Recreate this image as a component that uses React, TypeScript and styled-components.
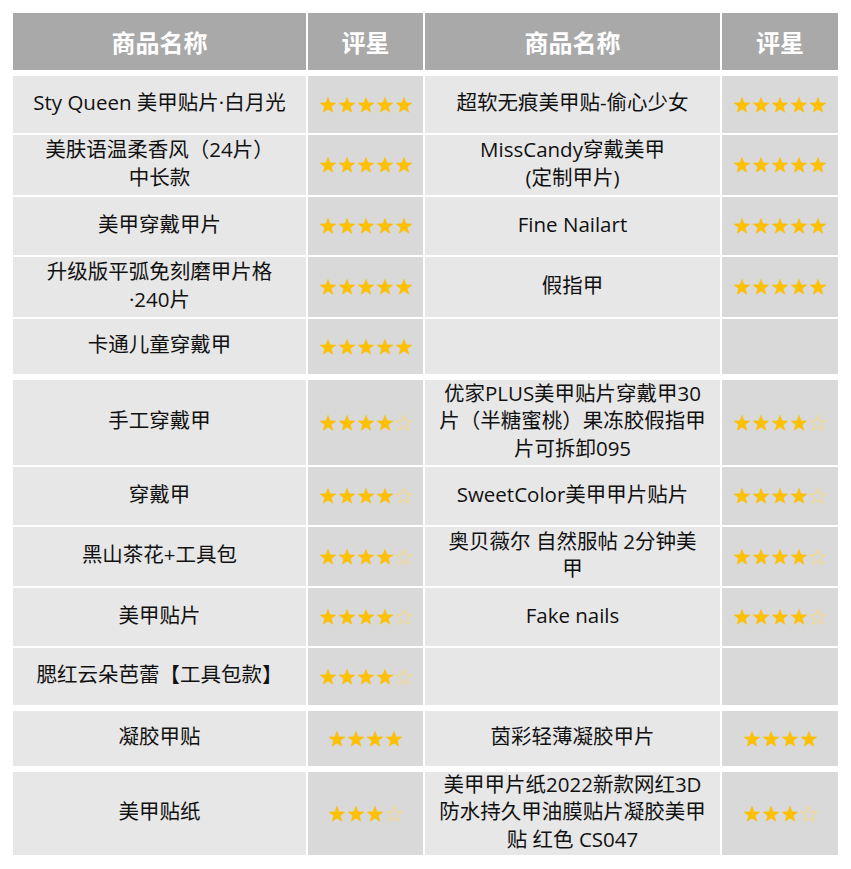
import React from "react";
import styled, { createGlobalStyle } from "styled-components";

type Rating = { full: number; empty: number };
type Item = { lines: string[]; rating: Rating } | null;
type Row = { h: number; left: Item; right: Item };

const five = { full: 5, empty: 0 };
const fourHalf = { full: 4, empty: 1 };
const four = { full: 4, empty: 0 };
const three = { full: 3, empty: 1 };

const groups: Row[][] = [
    [
        { h: 57, left: { lines: ["Sty Queen 美甲贴片·白月光"], rating: five }, right: { lines: ["超软无痕美甲贴-偷心少女"], rating: five } },
        { h: 60, left: { lines: ["美肤语温柔香风（24片）", "中长款"], rating: five }, right: { lines: ["MissCandy穿戴美甲", "(定制甲片)"], rating: five } },
        { h: 58, left: { lines: ["美甲穿戴甲片"], rating: five }, right: { lines: ["Fine Nailart"], rating: five } },
        { h: 60, left: { lines: ["升级版平弧免刻磨甲片格", "·240片"], rating: five }, right: { lines: ["假指甲"], rating: five } },
        { h: 55, left: { lines: ["卡通儿童穿戴甲"], rating: five }, right: null },
    ],
    [
        { h: 85, left: { lines: ["手工穿戴甲"], rating: fourHalf }, right: { lines: ["优家PLUS美甲贴片穿戴甲30", "片（半糖蜜桃）果冻胶假指甲", "片可拆卸095"], rating: fourHalf } },
        { h: 58, left: { lines: ["穿戴甲"], rating: fourHalf }, right: { lines: ["SweetColor美甲甲片贴片"], rating: fourHalf } },
        { h: 59, left: { lines: ["黑山茶花+工具包"], rating: fourHalf }, right: { lines: ["奥贝薇尔 自然服帖 2分钟美", "甲"], rating: fourHalf } },
        { h: 58, left: { lines: ["美甲贴片"], rating: fourHalf }, right: { lines: ["Fake nails"], rating: fourHalf } },
        { h: 57, left: { lines: ["腮红云朵芭蕾【工具包款】"], rating: fourHalf }, right: null },
    ],
    [
        { h: 55, left: { lines: ["凝胶甲贴"], rating: four }, right: { lines: ["茵彩轻薄凝胶甲片"], rating: four } },
    ],
    [
        { h: 83, left: { lines: ["美甲贴纸"], rating: three }, right: { lines: ["美甲甲片纸2022新款网红3D", "防水持久甲油膜贴片凝胶美甲", "贴 红色 CS047"], rating: three } },
    ],
];

const GlobalStyle = createGlobalStyle`
    body {
        margin: 0;
        background: #ffffff;
        font-family: "Open Sans", "Noto Sans CJK SC", sans-serif;
    }
`;

const STAR_POINTS =
    "12,1.8 14.7,9.08 22.46,9.4 16.37,14.22 18.47,21.7 12,17.4 5.53,21.7 7.63,14.22 1.54,9.4 9.3,9.08";

const Star = ({ filled }: { filled: boolean }) => (
    <svg width="18" height="18" viewBox="0 0 24 24">
        <polygon
            points={STAR_POINTS}
            fill={filled ? "#ffc000" : "none"}
            stroke={filled ? "#f7b900" : "#ffd86a"}
            strokeWidth={filled ? 0.6 : 1.1}
            strokeLinejoin="round"
        />
    </svg>
);

const Stars = ({ rating }: { rating: Rating }) => (
    <StarRow>
        {Array.from({ length: rating.full }).map((_, i) => (
            <Star key={"f" + i} filled />
        ))}
        {Array.from({ length: rating.empty }).map((_, i) => (
            <Star key={"e" + i} filled={false} />
        ))}
    </StarRow>
);

const ItemCells = ({ item }: { item: Item }) => (
    <>
        <NameCell>
            {item?.lines.map((line, i) => (
                <span key={i}>{line}</span>
            ))}
        </NameCell>
        <StarCell>{item && <Stars rating={item.rating} />}</StarCell>
    </>
);

export default function App() {
    return (
        <Page>
            <GlobalStyle />
            <Table>
                <Group>
                    <TableRow $h={57}>
                        <HeadCell>商品名称</HeadCell>
                        <HeadCell>评星</HeadCell>
                        <HeadCell>商品名称</HeadCell>
                        <HeadCell>评星</HeadCell>
                    </TableRow>
                </Group>
                {groups.map((rows, gi) => (
                    <Group key={gi}>
                        {rows.map((row, ri) => (
                            <TableRow key={ri} $h={row.h}>
                                <ItemCells item={row.left} />
                                <ItemCells item={row.right} />
                            </TableRow>
                        ))}
                    </Group>
                ))}
            </Table>
        </Page>
    );
}

const Page = styled.div`
    padding: 13px;
`;

const Table = styled.div`
    display: flex;
    flex-direction: column;
    gap: 6px;
    width: 825px;
`;

const Group = styled.div`
    display: flex;
    flex-direction: column;
    gap: 2px;
`;

const TableRow = styled.div<{ $h: number }>`
    display: grid;
    grid-template-columns: 293px 115px 295px 116px;
    grid-template-rows: minmax(0, 1fr);
    column-gap: 2px;
    height: ${(p) => p.$h}px;
`;

const HeadCell = styled.div`
    display: flex;
    align-items: center;
    justify-content: center;
    background: #a9a9a9;
    color: #ffffff;
    font-family: "Noto Sans CJK SC", sans-serif;
    font-size: 24px;
    font-weight: 700;
`;

const NameCell = styled.div`
    display: flex;
    flex-direction: column;
    align-items: center;
    justify-content: center;
    min-height: 0;
    padding-bottom: 3px;
    background: #e7e7e7;
    color: #111111;
    font-size: 20.5px;
    line-height: 27.5px;
    text-align: center;
    white-space: nowrap;
`;

const StarCell = styled.div`
    display: flex;
    align-items: center;
    justify-content: center;
    background: #d9d9d9;
`;

const StarRow = styled.div`
    display: flex;
    gap: 1px;
`;
